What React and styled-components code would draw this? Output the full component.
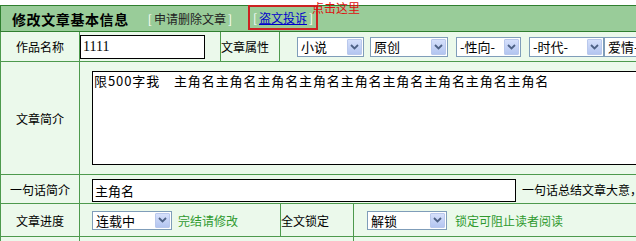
import React from 'react'
import styled, { createGlobalStyle } from 'styled-components'

const GlobalStyle = createGlobalStyle`
  html, body {
    margin: 0;
    padding: 0;
    background: #fff;
    overflow: hidden;
  }
  body {
    font-family: "Noto Sans CJK SC", "Liberation Sans", sans-serif;
    font-size: 12px;
    color: #000;
  }
`

const LINE = '#4d9a4d'

const Page = styled.div`
  position: relative;
  width: 780px;
  padding-top: 5px;
`

const Header = styled.div`
  display: flex;
  align-items: center;
  height: 25px;
  border: 1px solid #2f7f2f;
  background: #99cc99;
  padding-left: 11px;
`

const Title = styled.h1`
  margin: 0 17px 0 0;
  font-size: 14px;
  font-weight: bold;
  letter-spacing: 0.6px;
  line-height: 1;
`

const HeadLink = styled.span`
  font-size: 12px;
  line-height: 1;
  color: ${p => (p.$link ? '#0000cc' : '#222')};
  text-decoration: ${p => (p.$link ? 'underline' : 'none')};
`

const Bracket = styled.span`
  color: #fff;
  margin: 0 2px;
`

const Flagged = styled.span`
  display: inline-flex;
  align-items: center;
  align-self: flex-start;
  box-sizing: border-box;
  height: 25px;
  margin: -1px 0 0 14px;
  padding: 0 1px;
  border: 2px solid #cc2222;
`

const Callout = styled.span`
  position: absolute;
  left: 312px;
  top: 2px;
  font-size: 12px;
  line-height: 12px;
  color: #dd1111;
`

const Table = styled.div`
  border-left: 1px solid ${LINE};
  background: #ebf9eb;
`

const Row = styled.div`
  display: grid;
  grid-template-columns: ${p => p.$cols};
  height: ${p => p.$h}px;
`

const Cell = styled.div`
  display: flex;
  align-items: center;
  justify-content: ${p => (p.$center ? 'center' : 'flex-start')};
  box-sizing: border-box;
  padding-left: ${p => p.$pad || 0}px;
  border-right: 1px solid ${LINE};
  border-bottom: 1px solid ${LINE};
  font-size: 12px;
  white-space: nowrap;
  overflow: hidden;
`

const TextInput = styled.div`
  box-sizing: border-box;
  width: ${p => p.$w}px;
  height: ${p => p.$h}px;
  margin-top: ${p => p.$mt || 0}px;
  padding: 0 2px;
  display: flex;
  align-items: center;
  border: 1px solid #000;
  background: #fff;
  font-family: ${p => (p.$serif ? '"Liberation Serif", serif' : 'inherit')};
  font-size: ${p => (p.$serif ? 14 : 13)}px;
  flex-shrink: 0;
`

const TextArea = styled.div`
  box-sizing: border-box;
  width: 620px;
  height: 94px;
  padding: 1px 1px;
  border: 1px solid #000;
  background: #fff;
  font-size: 13px;
  letter-spacing: 0.9px;
  line-height: 15px;
  flex-shrink: 0;
`

const SelectBox = styled.div`
  display: inline-flex;
  align-items: center;
  justify-content: space-between;
  box-sizing: border-box;
  width: ${p => p.$w}px;
  height: ${p => p.$h || 20}px;
  margin-right: ${p => p.$mr || 0}px;
  padding: 1px 1px 1px 3px;
  border: 1px solid #7f9db9;
  background: #fff;
  font-size: 13px;
  line-height: 1;
  flex-shrink: 0;
`

const ArrowBtn = styled.span`
  display: flex;
  align-items: center;
  justify-content: center;
  box-sizing: border-box;
  width: 15px;
  height: 100%;
  border: 1px solid #b9c8ec;
  border-radius: 1px;
  background: linear-gradient(#d6e0fb, #b3c5f0);
`

const Hint = styled.span`
  margin-left: ${p => p.$ml || 0}px;
  color: ${p => (p.$green ? '#2f9a2f' : '#000')};
  font-size: 12px;
`

const Select = ({ children, w, h, mr }) => (
  <SelectBox $w={w} $h={h} $mr={mr}>
    <span>{children}</span>
    <ArrowBtn>
      <svg width="9" height="6" viewBox="0 0 9 6">
        <path d="M1 1 L4.5 4.5 L8 1" fill="none" stroke="#4d6185" strokeWidth="1.8" />
      </svg>
    </ArrowBtn>
  </SelectBox>
)

const App = () => {
  return (
    <Page>
      <GlobalStyle />
      <Header>
        <Title>修改文章基本信息</Title>
        <HeadLink>
          <Bracket>[</Bracket>申请删除文章<Bracket>]</Bracket>
        </HeadLink>
        <Flagged>
          <HeadLink>
            <Bracket>[</Bracket>
            <HeadLink $link>盗文投诉</HeadLink>
            <Bracket>]</Bracket>
          </HeadLink>
        </Flagged>
      </Header>
      <Callout>点击这里</Callout>

      <Table>
        <Row $cols="79px 141px 59px 1fr" $h={30}>
          <Cell $center>作品名称</Cell>
          <Cell>
            <TextInput $w={125} $h={24} $serif>1111</TextInput>
          </Cell>
          <Cell>文章属性</Cell>
          <Cell $pad={17}>
            <Select w={67} mr={6}>小说</Select>
            <Select w={78} mr={8}>原创</Select>
            <Select w={65} mr={8}>-性向-</Select>
            <Select w={75}>-时代-</Select>
            <Select w={80}>爱情-</Select>
          </Cell>
        </Row>
        <Row $cols="79px 1fr" $h={113}>
          <Cell $center>文章简介</Cell>
          <Cell $pad={12}>
            <TextArea>限500字我　主角名主角名主角名主角名主角名主角名主角名主角名主角名</TextArea>
          </Cell>
        </Row>
        <Row $cols="79px 1fr" $h={29}>
          <Cell $center>一句话简介</Cell>
          <Cell $pad={12}>
            <TextInput $w={424} $h={23} $mt={2}>主角名</TextInput>
            <Hint $ml={6}>一句话总结文章大意，</Hint>
          </Cell>
        </Row>
        <Row $cols="79px 201px 73px 1fr" $h={33}>
          <Cell $center>文章进度</Cell>
          <Cell $pad={12}>
            <Select w={80} h={19}>连载中</Select>
            <Hint $green $ml={6}>完结请修改</Hint>
          </Cell>
          <Cell>全文锁定</Cell>
          <Cell $pad={13}>
            <Select w={80} h={19}>解锁</Select>
            <Hint $green $ml={8}>锁定可阻止读者阅读</Hint>
          </Cell>
        </Row>
        <Row $cols="79px 274px 1fr" $h={30}>
          <Cell />
          <Cell />
          <Cell />
        </Row>
      </Table>
    </Page>
  )
}

export default App
